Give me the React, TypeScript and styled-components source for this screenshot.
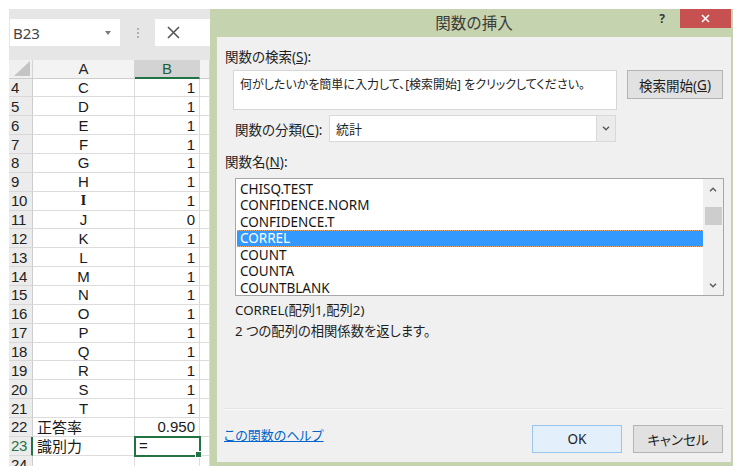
import React from "react";
import styled, { createGlobalStyle } from "styled-components";

const SHEET_FONT = `"Liberation Sans", "Noto Sans CJK JP", sans-serif`;
const UI_FONT = `"Noto Sans", "Noto Sans CJK JP", sans-serif`;
const EXCEL_GREEN = "#217346";

const GlobalStyle = createGlobalStyle`
  html, body { margin: 0; padding: 0; background: #fff; }
  body { width: 733px; height: 466px; overflow: hidden; }
  #root { width: 733px; height: 466px; }
  * { box-sizing: border-box; }
`;

const Page = styled.div`
  display: flex;
  align-items: flex-start;
  height: 466px;
  padding-top: 9px;
`;

/* ---------- worksheet ---------- */

const Sheet = styled.div`
  width: 201px;
  margin-left: 9px;
  display: flex;
  flex-direction: column;
  font-family: ${SHEET_FONT};
`;

const FormulaBand = styled.div`
  height: 50.7px;
  background: #e6e6e6;
  display: flex;
  align-items: flex-start;
  padding: 10px 0 0 1px;
`;

const NameBox = styled.div`
  width: 110px;
  height: 27px;
  background: #fff;
  display: flex;
  align-items: center;
  justify-content: space-between;
  padding: 0 9px 0 3px;
  font-family: ${UI_FONT};
  font-size: 15px;
  color: #444;
`;

const DropTriangle = styled.span`
  width: 0;
  height: 0;
  border-left: 3.5px solid transparent;
  border-right: 3.5px solid transparent;
  border-top: 4px solid #7a7a7a;
`;

const GripSlot = styled.div`
  width: 35px;
  height: 27px;
  display: flex;
  align-items: center;
  justify-content: center;
`;

const Grip = styled.span`
  width: 2px;
  height: 10px;
  background: repeating-linear-gradient(#b0b0b0 0 2px, transparent 2px 4px);
`;

const FxBox = styled.div`
  flex: 1;
  height: 27px;
  background: #fff;
  display: flex;
  align-items: center;
  padding-left: 12px;
`;

const Grid = styled.div`
  display: grid;
  grid-template-columns: 24px 102px 65px 10px;
  grid-auto-rows: 18.86px;
  background: #fff;
  font-size: 15px;
  color: #1a1a1a;
`;

const Corner = styled.div`
  background: #f0f0f0;
  border-right: 1px solid #d4d4d4;
  border-bottom: 1px solid #cdcdcd;
  display: flex;
  align-items: flex-end;
  justify-content: flex-end;
  padding: 0 1px 1px 0;
`;

const ColHeader = styled.div<{ $active?: boolean }>`
  background: ${(p) => (p.$active ? "#d3d3d3" : "#f3f3f3")};
  border-right: 1px solid #d4d4d4;
  border-bottom: ${(p) => (p.$active ? `2px solid ${EXCEL_GREEN}` : "1px solid #cdcdcd")};
  color: ${(p) => (p.$active ? "#1d5f3a" : "#262626")};
  display: flex;
  align-items: center;
  justify-content: center;
`;

const RowHeader = styled.div<{ $active?: boolean }>`
  background: #ececec;
  border-bottom: 1px solid #d8d8d8;
  border-right: ${(p) => (p.$active ? `2px solid ${EXCEL_GREEN}` : "1px solid #cdcdcd")};
  color: ${(p) => (p.$active ? EXCEL_GREEN : "#222")};
  display: flex;
  align-items: center;
  padding-left: 2px;
  letter-spacing: -0.3px;
`;

const Cell = styled.div<{ $align?: "left" | "center" | "right"; $selected?: boolean }>`
  position: relative;
  border-right: 1px solid #dcdcdc;
  border-bottom: 1px solid #dcdcdc;
  display: flex;
  align-items: center;
  justify-content: ${(p) =>
    p.$align === "center" ? "center" : p.$align === "right" ? "flex-end" : "flex-start"};
  padding: 0 4px;
  white-space: nowrap;
  outline: ${(p) => (p.$selected ? `2px solid ${EXCEL_GREEN}` : "none")};
  outline-offset: -1px;
  z-index: ${(p) => (p.$selected ? 1 : 0)};
  &::after {
    content: "";
    display: ${(p) => (p.$selected ? "block" : "none")};
    position: absolute;
    right: -3px;
    bottom: -3px;
    width: 5px;
    height: 5px;
    background: ${EXCEL_GREEN};
    border: 1px solid #fff;
  }
`;

const SerifGlyph = styled.span`
  font-family: "Liberation Serif", serif;
  font-weight: bold;
  font-size: 15px;
`;

/* ---------- dialog ---------- */

const Dialog = styled.div`
  width: 523px;
  height: 457px;
  background: #c5d4ae;
  display: flex;
  flex-direction: column;
  padding: 0 2px 4px 7px;
  font-family: ${UI_FONT};
  font-feature-settings: "palt";
  color: #1e1e1e;
`;

const TitleBar = styled.div`
  height: 28px;
  display: grid;
  grid-template-columns: 1fr auto 1fr;
  align-items: start;
`;

const Title = styled.div`
  grid-column: 2;
  line-height: 28px;
  font-size: 15.5px;
  color: #3c3c3c;
  font-feature-settings: normal;
`;

const TitleControls = styled.div`
  grid-column: 3;
  justify-self: end;
  display: flex;
  align-items: flex-start;
`;

const HelpMark = styled.div`
  width: 20px;
  height: 19px;
  margin-right: 8px;
  display: flex;
  align-items: center;
  justify-content: center;
  font-size: 12px;
  font-weight: bold;
  color: #3a3a3a;
`;

const CloseButton = styled.div`
  width: 51px;
  height: 19px;
  background: #c75050;
  display: flex;
  align-items: center;
  justify-content: center;
`;

const Body = styled.div`
  flex: 1;
  background: #f0f0f0;
  display: flex;
  flex-direction: column;
  padding: 0 8px 0 8px;
`;

const FieldLabel = styled.div<{ $top: number; $indent?: number }>`
  margin-top: ${(p) => p.$top}px;
  margin-left: ${(p) => p.$indent ?? 0}px;
  font-size: 13.5px;
  line-height: 18px;
  white-space: nowrap;
`;

const SearchRow = styled.div`
  margin-top: 4px;
  padding-left: 8px;
  display: flex;
  align-items: flex-start;
  gap: 10px;
`;

const SearchBox = styled.div`
  width: 384px;
  height: 40px;
  background: #fff;
  border: 1px solid #d6d6d6;
  padding: 5px 6px;
  font-size: 12px;
  line-height: 18px;
  color: #222;
  white-space: nowrap;
`;

const PushButton = styled.div<{ $width: number; $height: number; $default?: boolean }>`
  width: ${(p) => p.$width}px;
  height: ${(p) => p.$height}px;
  background: ${(p) => (p.$default ? "#e3effb" : "#e1e1e1")};
  border: 1px solid ${(p) => (p.$default ? "#99c4ec" : "#b4b4b4")};
  display: flex;
  align-items: center;
  justify-content: center;
  font-size: 13.5px;
  color: #1e1e1e;
  white-space: nowrap;
`;

const CategoryRow = styled.div`
  margin-top: 5px;
  padding-left: 10px;
  height: 27px;
  display: flex;
  align-items: center;
`;

const CategoryLabel = styled.div`
  width: 94px;
  font-size: 13.5px;
  white-space: nowrap;
`;

const Select = styled.div`
  width: 287px;
  height: 27px;
  background: #fff;
  border: 1px solid #d9d9d9;
  display: flex;
  align-items: center;
  padding-left: 6px;
  font-size: 13px;
`;

const SelectButton = styled.div`
  margin-left: auto;
  width: 19px;
  height: 25px;
  background: #ebebeb;
  border-left: 1px solid #d9d9d9;
  display: flex;
  align-items: center;
  justify-content: center;
`;

const ListBox = styled.div`
  margin-top: 7px;
  margin-left: 10px;
  width: 489px;
  height: 118px;
  border: 1px solid #a8a8a8;
  background: #fff;
  display: flex;
`;

const ListItems = styled.div`
  flex: 1;
  padding: 1.5px 0 0 1px;
  overflow: hidden;
`;

const ListItem = styled.div<{ $selected?: boolean }>`
  height: 16.5px;
  line-height: 14.5px;
  padding-left: 3px;
  font-size: 13.5px;
  white-space: nowrap;
  color: ${(p) => (p.$selected ? "#fff" : "#151515")};
  background: ${(p) => (p.$selected ? "#3399ff" : "transparent")};
  border-top: 1px dotted ${(p) => (p.$selected ? "#e9a86a" : "transparent")};
  border-bottom: 1px dotted ${(p) => (p.$selected ? "#e9a86a" : "transparent")};
`;

const ScrollBar = styled.div`
  width: 20px;
  background: #f0f0f0;
  display: flex;
  flex-direction: column;
  align-items: center;
`;

const ScrollArrow = styled.div<{ $end?: boolean }>`
  height: 20px;
  width: 100%;
  display: flex;
  align-items: center;
  justify-content: center;
  margin-top: ${(p) => (p.$end ? "auto" : "0")};
`;

const ScrollThumb = styled.div`
  margin-top: 8px;
  width: 17px;
  height: 18px;
  background: #cdcdcd;
`;

const InfoLine = styled.div<{ $top: number }>`
  margin-top: ${(p) => p.$top}px;
  margin-left: 10px;
  font-size: 13.3px;
  line-height: 20px;
  white-space: nowrap;
`;

const Spacer = styled.div`
  flex: 1;
`;

const Separator = styled.div`
  height: 2px;
  margin-left: -2px;
  border-top: 1px solid #e2e2e2;
  border-bottom: 1px solid #fbfbfb;
`;

const Footer = styled.div`
  margin-top: 15px;
  margin-bottom: 9px;
  height: 28px;
  display: flex;
  align-items: flex-start;
  gap: 11px;
`;

const HelpLink = styled.a`
  margin: 1px auto 0 -1px;
  font-size: 13px;
  line-height: 18px;
  color: #0066cc;
  text-decoration: underline;
  cursor: pointer;
`;

/* ---------- data ---------- */

type Row = { n: number; a: string; b: string; aAlign: "left" | "center"; serif?: boolean };

const letters = "CDEFGHIJKLMNOPQRST".split("");
const rows: Row[] = [
  ...letters.map((ch, i) => ({
    n: i + 4,
    a: ch,
    b: ch === "J" ? "0" : "1",
    aAlign: "center" as const,
    serif: ch === "I",
  })),
  { n: 22, a: "正答率", b: "0.950", aAlign: "left" },
];

const functions = [
  "CHISQ.TEST",
  "CONFIDENCE.NORM",
  "CONFIDENCE.T",
  "CORREL",
  "COUNT",
  "COUNTA",
  "COUNTBLANK",
];

const Chevron = ({ up }: { up?: boolean }) => (
  <svg width="8" height="5" viewBox="0 0 8 5">
    <path
      d={up ? "M1 4.2 L4 1.2 L7 4.2" : "M1 0.8 L4 3.8 L7 0.8"}
      fill="none"
      stroke="#5a5a5a"
      strokeWidth="1.4"
    />
  </svg>
);

export default function App() {
  return (
    <>
      <GlobalStyle />
      <Page>
        <Sheet>
          <FormulaBand>
            <NameBox>
              B23
              <DropTriangle />
            </NameBox>
            <GripSlot>
              <Grip />
            </GripSlot>
            <FxBox>
              <svg width="13" height="13" viewBox="0 0 13 13">
                <path d="M1 1 L12 12 M12 1 L1 12" stroke="#555" strokeWidth="1.6" />
              </svg>
            </FxBox>
          </FormulaBand>
          <Grid>
            <Corner>
              <svg width="18" height="16" viewBox="0 0 18 16">
                <polygon points="17,0 17,15 1,15" fill="#c4c4c4" />
              </svg>
            </Corner>
            <ColHeader>A</ColHeader>
            <ColHeader $active>B</ColHeader>
            <ColHeader />
            {rows.map((r) => (
              <React.Fragment key={r.n}>
                <RowHeader>{r.n}</RowHeader>
                <Cell $align={r.aAlign}>{r.serif ? <SerifGlyph>{r.a}</SerifGlyph> : r.a}</Cell>
                <Cell $align="right">{r.b}</Cell>
                <Cell />
              </React.Fragment>
            ))}
            <RowHeader $active>23</RowHeader>
            <Cell>識別力</Cell>
            <Cell $selected>=</Cell>
            <Cell />
            <RowHeader>24</RowHeader>
            <Cell />
            <Cell />
            <Cell />
          </Grid>
        </Sheet>

        <Dialog>
          <TitleBar>
            <Title>関数の挿入</Title>
            <TitleControls>
              <HelpMark>?</HelpMark>
              <CloseButton>
                <svg width="9" height="9" viewBox="0 0 9 9">
                  <path d="M1 1 L8 8 M8 1 L1 8" stroke="#fff" strokeWidth="1.6" />
                </svg>
              </CloseButton>
            </TitleControls>
          </TitleBar>
          <Body>
            <FieldLabel $top={11}>
              関数の検索(<u>S</u>):
            </FieldLabel>
            <SearchRow>
              <SearchBox>何がしたいかを簡単に入力して、[検索開始] をクリックしてください。</SearchBox>
              <PushButton $width={96} $height={29}>
                検索開始(<u>G</u>)
              </PushButton>
            </SearchRow>
            <CategoryRow>
              <CategoryLabel>
                関数の分類(<u>C</u>):
              </CategoryLabel>
              <Select>
                統計
                <SelectButton>
                  <Chevron />
                </SelectButton>
              </Select>
            </CategoryRow>
            <FieldLabel $top={11}>
              関数名(<u>N</u>):
            </FieldLabel>
            <ListBox>
              <ListItems>
                {functions.map((f) => (
                  <ListItem key={f} $selected={f === "CORREL"}>
                    {f}
                  </ListItem>
                ))}
              </ListItems>
              <ScrollBar>
                <ScrollArrow>
                  <Chevron up />
                </ScrollArrow>
                <ScrollThumb />
                <ScrollArrow $end>
                  <Chevron />
                </ScrollArrow>
              </ScrollBar>
            </ListBox>
            <InfoLine $top={4}>CORREL(配列1,配列2)</InfoLine>
            <InfoLine $top={1}>2 つの配列の相関係数を返します。</InfoLine>
            <Spacer />
            <Separator />
            <Footer>
              <HelpLink>この関数のヘルプ</HelpLink>
              <PushButton $width={90} $height={28} $default>
                OK
              </PushButton>
              <PushButton $width={90} $height={28}>
                キャンセル
              </PushButton>
            </Footer>
          </Body>
        </Dialog>
      </Page>
    </>
  );
}
